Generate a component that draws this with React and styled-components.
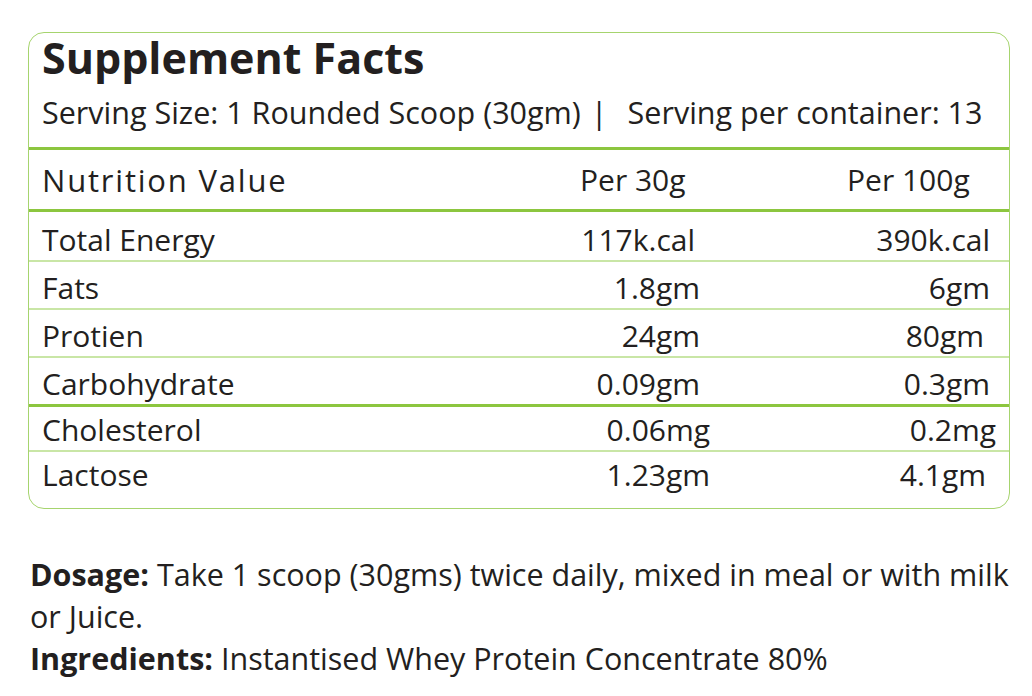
import React from 'react'
import styled, { createGlobalStyle } from 'styled-components';

const GlobalStyle = createGlobalStyle`
    body {
        margin: 0;
        background: #ffffff;
        font-family: "Open Sans", "Noto Sans", sans-serif;
        color: #231f20;
    }
`;

const Page = styled.div`
    padding: 32px 22px 0 28px;
`;

const FactsBox = styled.div`
    border: 1px solid #a6d46e;
    border-radius: 16px;
    padding-bottom: 13px;
`;

const Header = styled.div`
    padding: 0 13px;
    border-bottom: 3px solid #8cc63f;
`;

const Title = styled.h1`
    margin: 0;
    font-size: 43px;
    font-weight: 700;
    line-height: 50px;
`;

const Serving = styled.p`
    margin: 0;
    padding: 9px 0 15px;
    font-size: 30.5px;
    line-height: 40px;
    white-space: nowrap;
`;

const Bar = styled.span`
    margin: 0 20px 0 10px;
`;

const Row = styled.div`
    display: grid;
    grid-template-columns: 1fr 150px ${p => p.$last ? '286px' : '290px'};
    padding: ${p => p.$top}px ${p => p.$right}px 0 13px;
    border-bottom: ${p => p.$line === 'thick' ? '3px solid #8cc63f' : p.$line === 'thin' ? '2px solid #c9e6a6' : 'none'};
    font-size: 30px;
    line-height: 40px;
`;

const HeadRow = styled(Row)`
    padding-bottom: 7px;
    line-height: 44px;
`;

const HeadLabel = styled.span`
    font-size: 31px;
    letter-spacing: 1.8px;
`;

const HeadCell = styled.span`
    padding-left: ${p => p.$offset}px;
`;

const Value = styled.span`
    text-align: right;
    padding-right: ${p => p.$inset || 0}px;
`;

const Notes = styled.div`
    margin-top: 44px;
    padding-left: 2px;
`;

const Note = styled.p`
    margin: 0;
    font-size: 30.5px;
    line-height: 42px;
`;

const Strong = styled.b`
    font-weight: 700;
`;

const upper = [
    ['Total Energy', '117k.cal', '390k.cal', 5, 0],
    ['Fats', '1.8gm', '6gm', 0, 0],
    ['Protien', '24gm', '80gm', 0, 6],
    ['Carbohydrate', '0.09gm', '0.3gm', 0, -3],
];

const lower = [
    ['Cholesterol', '0.06mg', '0.2mg', 0, 0],
    ['Lactose', '1.23gm', '4.1gm', 0, 10],
];

const App = () => (
    <Page>
        <GlobalStyle />
        <FactsBox>
            <Header>
                <Title>Supplement Facts</Title>
                <Serving>
                    Serving Size: 1 Rounded Scoop (30gm)<Bar>|</Bar>Serving per container: 13
                </Serving>
            </Header>
            <HeadRow $top={8} $right={19} $line="thick">
                <HeadLabel>Nutrition Value</HeadLabel>
                <HeadCell $offset={30}>Per 30g</HeadCell>
                <HeadCell $offset={147}>Per 100g</HeadCell>
            </HeadRow>
            {upper.map(([label, a, b, ia, ib], i) => (
                <Row
                    key={label}
                    $top={i === 0 ? 8 : 6}
                    $right={19}
                    $line={i === upper.length - 1 ? 'thick' : 'thin'}
                >
                    <span>{label}</span>
                    <Value $inset={ia}>{a}</Value>
                    <Value $inset={ib}>{b}</Value>
                </Row>
            ))}
            {lower.map(([label, a, b, ia, ib], i) => (
                <Row
                    key={label}
                    $last
                    $top={3}
                    $right={13}
                    $line={i === lower.length - 1 ? 'none' : 'thin'}
                >
                    <span>{label}</span>
                    <Value $inset={ia}>{a}</Value>
                    <Value $inset={ib}>{b}</Value>
                </Row>
            ))}
        </FactsBox>
        <Notes>
            <Note>
                <Strong>Dosage:</Strong> Take 1 scoop (30gms) twice daily, mixed in meal or with milk or Juice.
            </Note>
            <Note>
                <Strong>Ingredients:</Strong> Instantised Whey Protein Concentrate 80%
            </Note>
        </Notes>
    </Page>
)

export default App
